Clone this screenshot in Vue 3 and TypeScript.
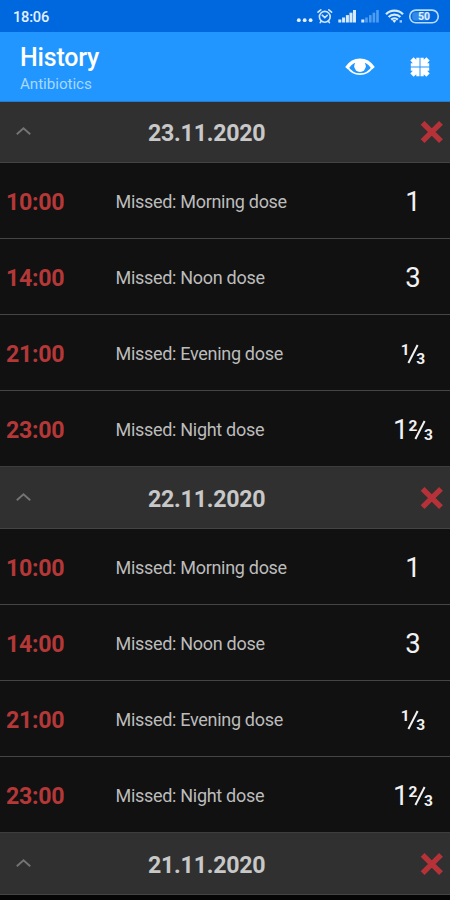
<script setup lang="ts">
interface Dose {
  time: string
  label: string
  whole: string
  numerator?: string
  denominator?: string
}

interface Day {
  date: string
  doses: Dose[]
}

const doses: Dose[] = [
  { time: '10:00', label: 'Missed: Morning dose', whole: '1' },
  { time: '14:00', label: 'Missed: Noon dose', whole: '3' },
  { time: '21:00', label: 'Missed: Evening dose', whole: '', numerator: '1', denominator: '3' },
  { time: '23:00', label: 'Missed: Night dose', whole: '1', numerator: '2', denominator: '3' },
]

const days: Day[] = [
  { date: '23.11.2020', doses },
  { date: '22.11.2020', doses },
  { date: '21.11.2020', doses: [] },
]
</script>

<template>
  <div class="screen">
    <div class="status">
      <span class="clock">18:06</span>
      <svg class="indicators" width="146" height="20" viewBox="0 0 146 20" fill="none">
        <g fill="#e4f1ff">
          <circle cx="2.800" cy="14.200" r="1.900" />
          <circle cx="8.700" cy="14.200" r="1.900" />
          <circle cx="14.600" cy="14.200" r="1.900" />
        </g>
        <g stroke="#cfe6ff" stroke-width="1.600" stroke-linecap="round">
          <circle cx="28.800" cy="10.800" r="5.400" />
          <path d="M22 6.200l2.800-2.400M35.600 6.200l-2.800-2.400M25.200 15.200l-1 1.400M32.400 15.200l1 1.400M26.200 9.200l2.600 2.400 2.400-2.200" />
        </g>
        <g fill="#d6eaff">
          <rect x="42.300" y="13.500" width="3" height="3" />
          <rect x="46.100" y="11.500" width="3" height="5" />
          <rect x="49.900" y="9.100" width="3" height="7.400" />
          <rect x="53.500" y="6.700" width="3" height="9.800" />
          <rect x="57" y="4" width="3" height="12.500" />
          <rect x="65.300" y="13.500" width="3" height="3" />
        </g>
        <g fill="#4f9df0">
          <rect x="69.200" y="11.500" width="2.600" height="5" />
          <rect x="73" y="9.100" width="2.600" height="7.400" />
          <rect x="76.600" y="6.700" width="2.600" height="9.800" />
          <rect x="80.200" y="4" width="2.600" height="12.500" />
        </g>
        <g stroke="#d6eaff" stroke-width="2.200">
          <path d="M90 8.200a12 12 0 0 1 17 0" />
          <path d="M92.600 11a8.300 8.300 0 0 1 11.800 0" />
          <path d="M95.200 13.600a4.700 4.700 0 0 1 6.600 0" />
        </g>
        <path d="M96.300 14.600a2.900 2.900 0 0 1 4 0l-2 2.400z" fill="#d6eaff" />
        <rect x="103.600" y="14.200" width="2.400" height="2.400" fill="#9ccbff" />
        <rect x="113.800" y="4.100" width="28.400" height="12.600" rx="6" stroke="#b9dbff" stroke-width="1.600" />
        <path d="M119 6.200h13v8.400h-13a3 3 0 0 1-2.800-3v-2.400a3 3 0 0 1 2.800-3z" fill="#3389e8" />
        <text x="128" y="14.400" text-anchor="middle" class="battery">50</text>
      </svg>
    </div>

    <header class="appbar">
      <div class="titles">
        <h1>History</h1>
        <p>Antibiotics</p>
      </div>
      <svg class="eye" width="32" height="22" viewBox="0 0 32 22">
        <path d="M3.500 11Q8 18.200 16 18.200T28.500 11" fill="none" stroke="#fff" stroke-width="1.700" />
        <path d="M1.200 11Q7 2.600 16 2.600T30.800 11L28 13.600Q24.600 8.400 21.400 7h-10.800Q7.400 8.400 4 13.600z" fill="#fff" />
        <circle cx="16" cy="10.200" r="5.800" fill="#fff" />
      </svg>
      <svg class="collapse" width="22" height="22" viewBox="0 0 22 22">
        <g v-for="angle in [0, 90, 180, 270]" :key="angle" :transform="`rotate(${angle} 11 11)`">
          <path d="M10.500 10.500H1.800V7.300h2L1.300 4.600 4.600 1.300 7.300 3.800v-2h3.200z" fill="#fff" />
        </g>
      </svg>
    </header>

    <section v-for="day in days" :key="day.date" class="day">
      <div class="day-header">
        <svg class="chevron" width="16" height="10" viewBox="0 0 16 10">
          <path d="M.8 8.300 7.500 2.200l6.700 6.100" fill="none" stroke="#747474" stroke-width="1.900" />
        </svg>
        <span class="date">{{ day.date }}</span>
        <svg class="cross" width="24" height="24" viewBox="0 0 24 24">
          <path d="M2.600 2.800 21 21.200M21 2.800 2.600 21.200" stroke="#b53238" stroke-width="5.400" />
        </svg>
      </div>
      <div v-for="dose in day.doses" :key="dose.time" class="dose">
        <span class="time">{{ dose.time }}</span>
        <span class="label">{{ dose.label }}</span>
        <span class="amount">
          <span v-if="dose.whole">{{ dose.whole }}</span>
          <span v-if="dose.numerator" class="fraction">
            <span class="num">{{ dose.numerator }}</span>
            <svg class="bar" width="12" height="20" viewBox="0 0 12 20">
              <path d="M1.400 19 10.600 1" stroke="#f2f2f2" stroke-width="2" />
            </svg>
            <span class="den">{{ dose.denominator }}</span>
          </span>
        </span>
      </div>
    </section>
  </div>
</template>

<style>
body {
  margin: 0;
  background: #050505;
}
</style>

<style scoped>
.screen {
  width: 450px;
  height: 900px;
  overflow: hidden;
  background: #050505;
  font-family: Roboto, "Liberation Sans", sans-serif;
}

.status {
  box-sizing: border-box;
  display: flex;
  align-items: center;
  justify-content: space-between;
  height: 32px;
  padding: 0 8px 0 13px;
  background: #0068de;
}

.clock {
  padding-top: 2px;
  font-size: 14.600px;
  font-weight: 500;
  line-height: 30px;
  letter-spacing: -0.200px;
  color: #e4f1ff;
}

.indicators {
  flex: none;
}

.battery {
  font-size: 10.500px;
  font-weight: 700;
  fill: #e4f1ff;
}

.appbar {
  box-sizing: border-box;
  display: flex;
  align-items: center;
  height: 70px;
  padding: 1px 19px 0 20px;
  background: #2196ff;
  border-bottom: 1px solid #247cc8;
}

.titles {
  flex: 1;
  padding-top: 4px;
}

h1 {
  margin: 0;
  font-size: 25px;
  font-weight: 500;
  line-height: 30px;
  letter-spacing: -0.200px;
  color: #fff;
}

p {
  margin: 0;
  font-size: 15.200px;
  line-height: 22px;
  letter-spacing: -0.050px;
  color: #a9d8ff;
}

.eye {
  margin-right: 33px;
}

.day-header {
  box-sizing: border-box;
  display: grid;
  grid-template-columns: 132px 1fr 132px;
  align-items: center;
  height: 63px;
  padding: 1px 6px 0 16px;
  background: #303030;
  border-top: 1px solid #3d3d3d;
  border-bottom: 1px solid #444;
}

.day:first-of-type .day-header {
  height: 61px;
  padding-top: 0;
  border-top: 0;
}

.date {
  padding-top: 2px;
  font-size: 23.200px;
  font-weight: 700;
  line-height: 30px;
  letter-spacing: -0.250px;
  white-space: nowrap;
  color: #c8c8c8;
}

.chevron {
  margin-bottom: 2px;
}

.cross {
  justify-self: end;
}

.dose {
  box-sizing: border-box;
  display: grid;
  grid-template-columns: 109.500px 1fr 74px;
  align-items: center;
  height: 76px;
  padding: 2px 0 0 6px;
  background: #111;
  border-bottom: 1px solid #454545;
}

.dose:last-child {
  height: 75px;
  border-bottom: 0;
}

.time {
  font-size: 23.200px;
  font-weight: 700;
  letter-spacing: -0.300px;
  color: #b53838;
}

.label {
  font-size: 18px;
  letter-spacing: -0.300px;
  color: #bcbcbc;
}

.amount {
  display: flex;
  justify-content: center;
  align-items: center;
  padding-top: 1px;
  font-size: 27.500px;
  line-height: 32px;
  color: #f2f2f2;
}

.fraction {
  display: flex;
  align-items: center;
  font-size: 15.500px;
  font-weight: 700;
  line-height: 20px;
}

.num {
  padding-bottom: 8px;
}

.bar {
  margin: 0 -2.500px 0 -3px;
}

.den {
  padding-top: 10px;
}
</style>
